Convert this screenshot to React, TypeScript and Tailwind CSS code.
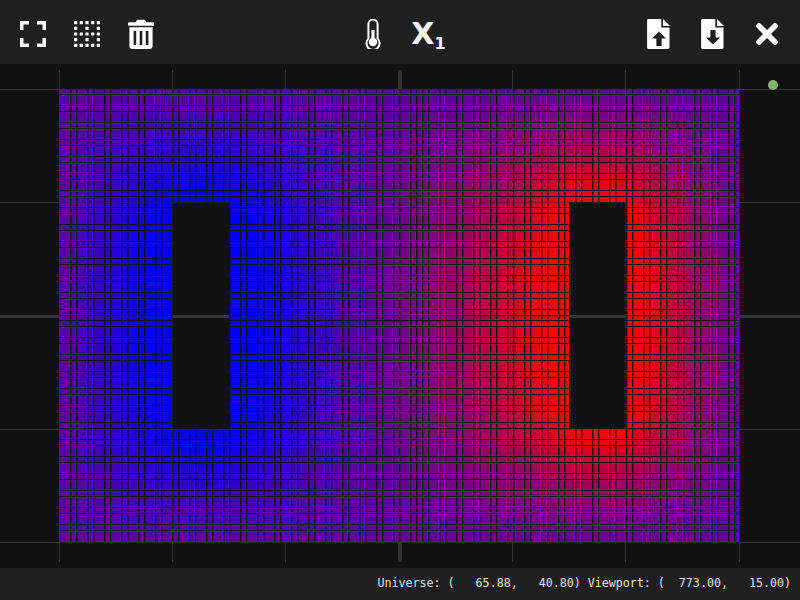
import { ReactNode, useMemo } from 'react';

const COLS = 120;
const ROWS = 80;
const CELL = 680 / 120;
const PLATE_L = { x0: 20, x1: 30, y0: 20, y1: 60, t: -0.1 };
const PLATE_R = { x0: 90, x1: 100, y0: 20, y1: 60, t: 1.1 };

const inPlate = (i: number, j: number, p: typeof PLATE_L) => i >= p.x0 && i < p.x1 && j >= p.y0 && j < p.y1;

// relax the field, outer edge fixed
function solveField() {
  const w = COLS + 2;
  const h = ROWS + 2;
  const f = new Float64Array(w * h).fill(0.36);
  for (let it = 0; it < 900; it++) {
    for (let j = 1; j <= ROWS; j++) {
      for (let i = 1; i <= COLS; i++) {
        const a = i - 1;
        const b = j - 1;
        if (inPlate(a, b, PLATE_L)) f[j * w + i] = PLATE_L.t;
        else if (inPlate(a, b, PLATE_R)) f[j * w + i] = PLATE_R.t;
        else {
          const n = (f[j * w + i - 1] + f[j * w + i + 1] + f[(j - 1) * w + i] + f[(j + 1) * w + i]) / 4;
          f[j * w + i] += 1.85 * (n - f[j * w + i]);
        }
      }
    }
  }
  return (i: number, j: number) => Math.min(1, Math.max(0, f[(j + 1) * w + i + 1]));
}

// dark seams between the cells, the phase flips at the middle
function seams(start: number[], end: number[], stop: number, min: number, max: number) {
  const out: number[] = [];
  for (const s of start) for (let v = s; v <= stop; v += 17) out.push(v);
  for (const e of end) for (let v = e; v > stop && v >= min; v -= 17) if (v <= max) out.push(v);
  return out.sort((a, b) => a - b);
}

const SEAM_X = seams([70, 76], [728, 734], 416, 60, 738);
const SEAM_Y = seams([94, 105], [530, 524], 316, 90, 541);

function HeatMap() {
  const cells = useMemo(() => {
    const value = solveField();
    const list: ReactNode[] = [];
    for (let j = 0; j < ROWS; j++) {
      for (let i = 0; i < COLS; i++) {
        if (inPlate(i, j, PLATE_L) || inPlate(i, j, PLATE_R)) continue;
        const x0 = Math.round(59 + i * CELL);
        const x1 = Math.round(59 + (i + 1) * CELL);
        const y0 = Math.round(89 + j * CELL);
        const y1 = Math.round(89 + (j + 1) * CELL);
        const t = value(i, j);
        list.push(
          <rect key={`${i}-${j}`} x={x0} y={y0} width={x1 - x0} height={y1 - y0} fill={`rgb(${Math.round(t * 255)},0,${Math.round((1 - t) * 255)})`} />,
        );
      }
    }
    return list;
  }, []);

  const rowEdges = [88, ...SEAM_Y, 542];
  const dashes: ReactNode[] = [];
  SEAM_X.forEach((x) => {
    for (let r = 0; r < rowEdges.length - 1; r++) {
      const y0 = rowEdges[r] + 1.5;
      const y1 = rowEdges[r + 1] - 0.5;
      if (y1 > y0) dashes.push(<rect key={`${x}-${r}`} x={x} y={y0} width={1.4} height={y1 - y0} fill="#111111" shapeRendering="auto" />);
    }
  });

  const gridX = [59, 172, 285, 512, 625, 739];
  const gridY = [89, 202, 429, 542];

  return (
    <svg width={800} height={492} viewBox="0 70 800 492" shapeRendering="crispEdges" className="block">
      {cells}
      {SEAM_Y.map((y) => (
        <rect key={y} x={59} y={y} width={680} height={1} fill="#111111" />
      ))}
      {dashes}
      <rect x={172} y={202} width={57} height={227} fill="#111111" />
      <rect x={569} y={202} width={56} height={227} fill="#111111" />
      {gridX.map((x) => (
        <g key={x}>
          <rect x={x} y={70} width={1} height={19} fill="#333333" />
          <rect x={x} y={89} width={1} height={453} fill="#333333" fillOpacity={0.4} />
          <rect x={x} y={542} width={1} height={20} fill="#333333" />
        </g>
      ))}
      {gridY.map((y) => (
        <g key={y}>
          <rect x={0} y={y} width={59} height={1} fill="#333333" />
          <rect x={59} y={y} width={680} height={1} fill="#333333" fillOpacity={0.4} />
          <rect x={739} y={y} width={61} height={1} fill="#333333" />
        </g>
      ))}
      <rect x={398} y={70} width={4} height={19} fill="#333333" />
      <rect x={398} y={89} width={4} height={453} fill="#333333" fillOpacity={0.25} />
      <rect x={398} y={542} width={4} height={20} fill="#333333" />
      <rect x={0} y={315} width={59} height={3} fill="#333333" />
      <rect x={59} y={315} width={680} height={3} fill="#333333" fillOpacity={0.25} />
      <rect x={739} y={315} width={61} height={3} fill="#333333" />
      <rect x={173} y={315} width={56} height={3} fill="#333333" />
      <rect x={569} y={315} width={56} height={3} fill="#333333" />
      <circle cx={773} cy={85} r={5} fill="#82b06e" shapeRendering="auto" />
    </svg>
  );
}

function CornersIcon() {
  return (
    <svg width={30} height={30} viewBox="0 0 30 30" fill="white">
      <path d="M2 2h9v3.5H5.5V11H2zM19 2h9v9h-3.5V5.5H19zM2 19h3.5v5.5H11V28H2zM24.5 19H28v9h-9v-3.5h5.5z" />
    </svg>
  );
}

function DotsIcon() {
  const dots: [number, number][] = [];
  for (let r = 0; r < 5; r++) {
    for (let c = 0; c < 5; c++) {
      if (r % 2 === 0 || c % 2 === 0) dots.push([c, r]);
    }
  }
  return (
    <svg width={30} height={30} viewBox="0 0 30 30" fill="white">
      {dots.map(([c, r]) => (
        <rect key={`${c}${r}`} x={2 + c * 5.7} y={2 + r * 5.7} width={3.2} height={3.2} rx={0.5} />
      ))}
    </svg>
  );
}

function TrashIcon() {
  return (
    <svg width={30} height={30} viewBox="0 0 30 30" fill="white">
      <path d="M2 4.5C2 3.7 2.5 3.2 3.3 3.2h6.2L10.6 1.4C10.9 1 11.3.8 11.8.8h6.4c.5 0 .9.2 1.2.6l1.1 1.8h6.2c.8 0 1.3.5 1.3 1.3v1.8c0 .3-.2.5-.5.5H2.5c-.3 0-.5-.2-.5-.5z" />
      <path
        fillRule="evenodd"
        d="M3.4 8.2h23.2v19c0 1.6-1.2 2.8-2.8 2.8H6.2c-1.6 0-2.8-1.2-2.8-2.8zM7.6 12v14h2.6V12zM13.7 12v14h2.6V12zM19.8 12v14h2.6V12z"
      />
    </svg>
  );
}

function ThermometerIcon() {
  return (
    <svg width={30} height={30} viewBox="0 0 30 30" fill="none">
      <path
        d="M10.4 19.6V5.2a4.6 4.6 0 0 1 9.2 0v14.4a6.6 6.6 0 1 1-9.2 0z"
        stroke="white"
        strokeWidth={2}
      />
      <rect x={13.4} y={11} width={3.2} height={12} fill="white" />
      <circle cx={15} cy={23} r={4.2} fill="white" />
    </svg>
  );
}

function FileIcon({ up }: { up: boolean }) {
  const arrow = up ? 'M15 12.5l7 7h-4.4V27h-5.2v-7.5H8z' : 'M12.4 11h5.2v7.5H22l-7 7-7-7h4.4z';
  return (
    <svg width={30} height={30} viewBox="0 0 30 30" fill="white">
      <path fillRule="evenodd" d="M4.5 0h12.8v8.6h8.2v20c0 .8-.6 1.4-1.4 1.4H4.5c-.8 0-1.4-.6-1.4-1.4V1.4C3.1.6 3.7 0 4.5 0z" />
      <path d="M19 0l7 7h-7z" />
      <path d={arrow} fill="#1f1f1f" />
    </svg>
  );
}

function CloseIcon() {
  return (
    <svg width={30} height={30} viewBox="0 0 30 30" fill="none">
      <path d="M7 7l16 16M23 7L7 23" stroke="white" strokeWidth={5.5} strokeLinecap="round" />
    </svg>
  );
}

function SubscriptIcon() {
  return (
    <span className="flex items-end pl-[3px] text-white font-bold font-['DejaVu_Sans',sans-serif] leading-none">
      <span className="text-[30px] leading-[30px]">X</span>
      <span className="text-[16px] leading-[16px] -mb-[3px]">1</span>
    </span>
  );
}

function ToolButton({ children }: { children: ReactNode }) {
  return <button className="w-[54px] h-full pt-[3px] flex items-center justify-center">{children}</button>;
}

export default function App() {
  return (
    <div className="w-[800px] h-[600px] flex flex-col bg-[#111111] overflow-hidden">
      {/* Toolbar */}
      <div className="h-16 bg-[#1f1f1f] px-1.5 flex items-center justify-between shrink-0">
        <div className="flex h-full">
          <ToolButton><CornersIcon /></ToolButton>
          <ToolButton><DotsIcon /></ToolButton>
          <ToolButton><TrashIcon /></ToolButton>
        </div>
        <div className="flex h-full">
          <ToolButton><ThermometerIcon /></ToolButton>
          <ToolButton><SubscriptIcon /></ToolButton>
        </div>
        <div className="flex h-full">
          <ToolButton><FileIcon up /></ToolButton>
          <ToolButton><FileIcon up={false} /></ToolButton>
          <ToolButton><CloseIcon /></ToolButton>
        </div>
      </div>

      {/* Viewport */}
      <div className="flex-1 pt-1.5">
        <HeatMap />
      </div>

      {/* Status bar */}
      <div className="h-8 bg-[#1f1f1f] shrink-0 flex items-center justify-end pr-[9px]">
        <span className="text-[11.65px] text-[#e0e0e0] whitespace-pre font-['DejaVu_Sans_Mono',monospace]">
          {'Universe: (   65.88,   40.80) Viewport: (  773.00,   15.00)'}
        </span>
      </div>
    </div>
  );
}
